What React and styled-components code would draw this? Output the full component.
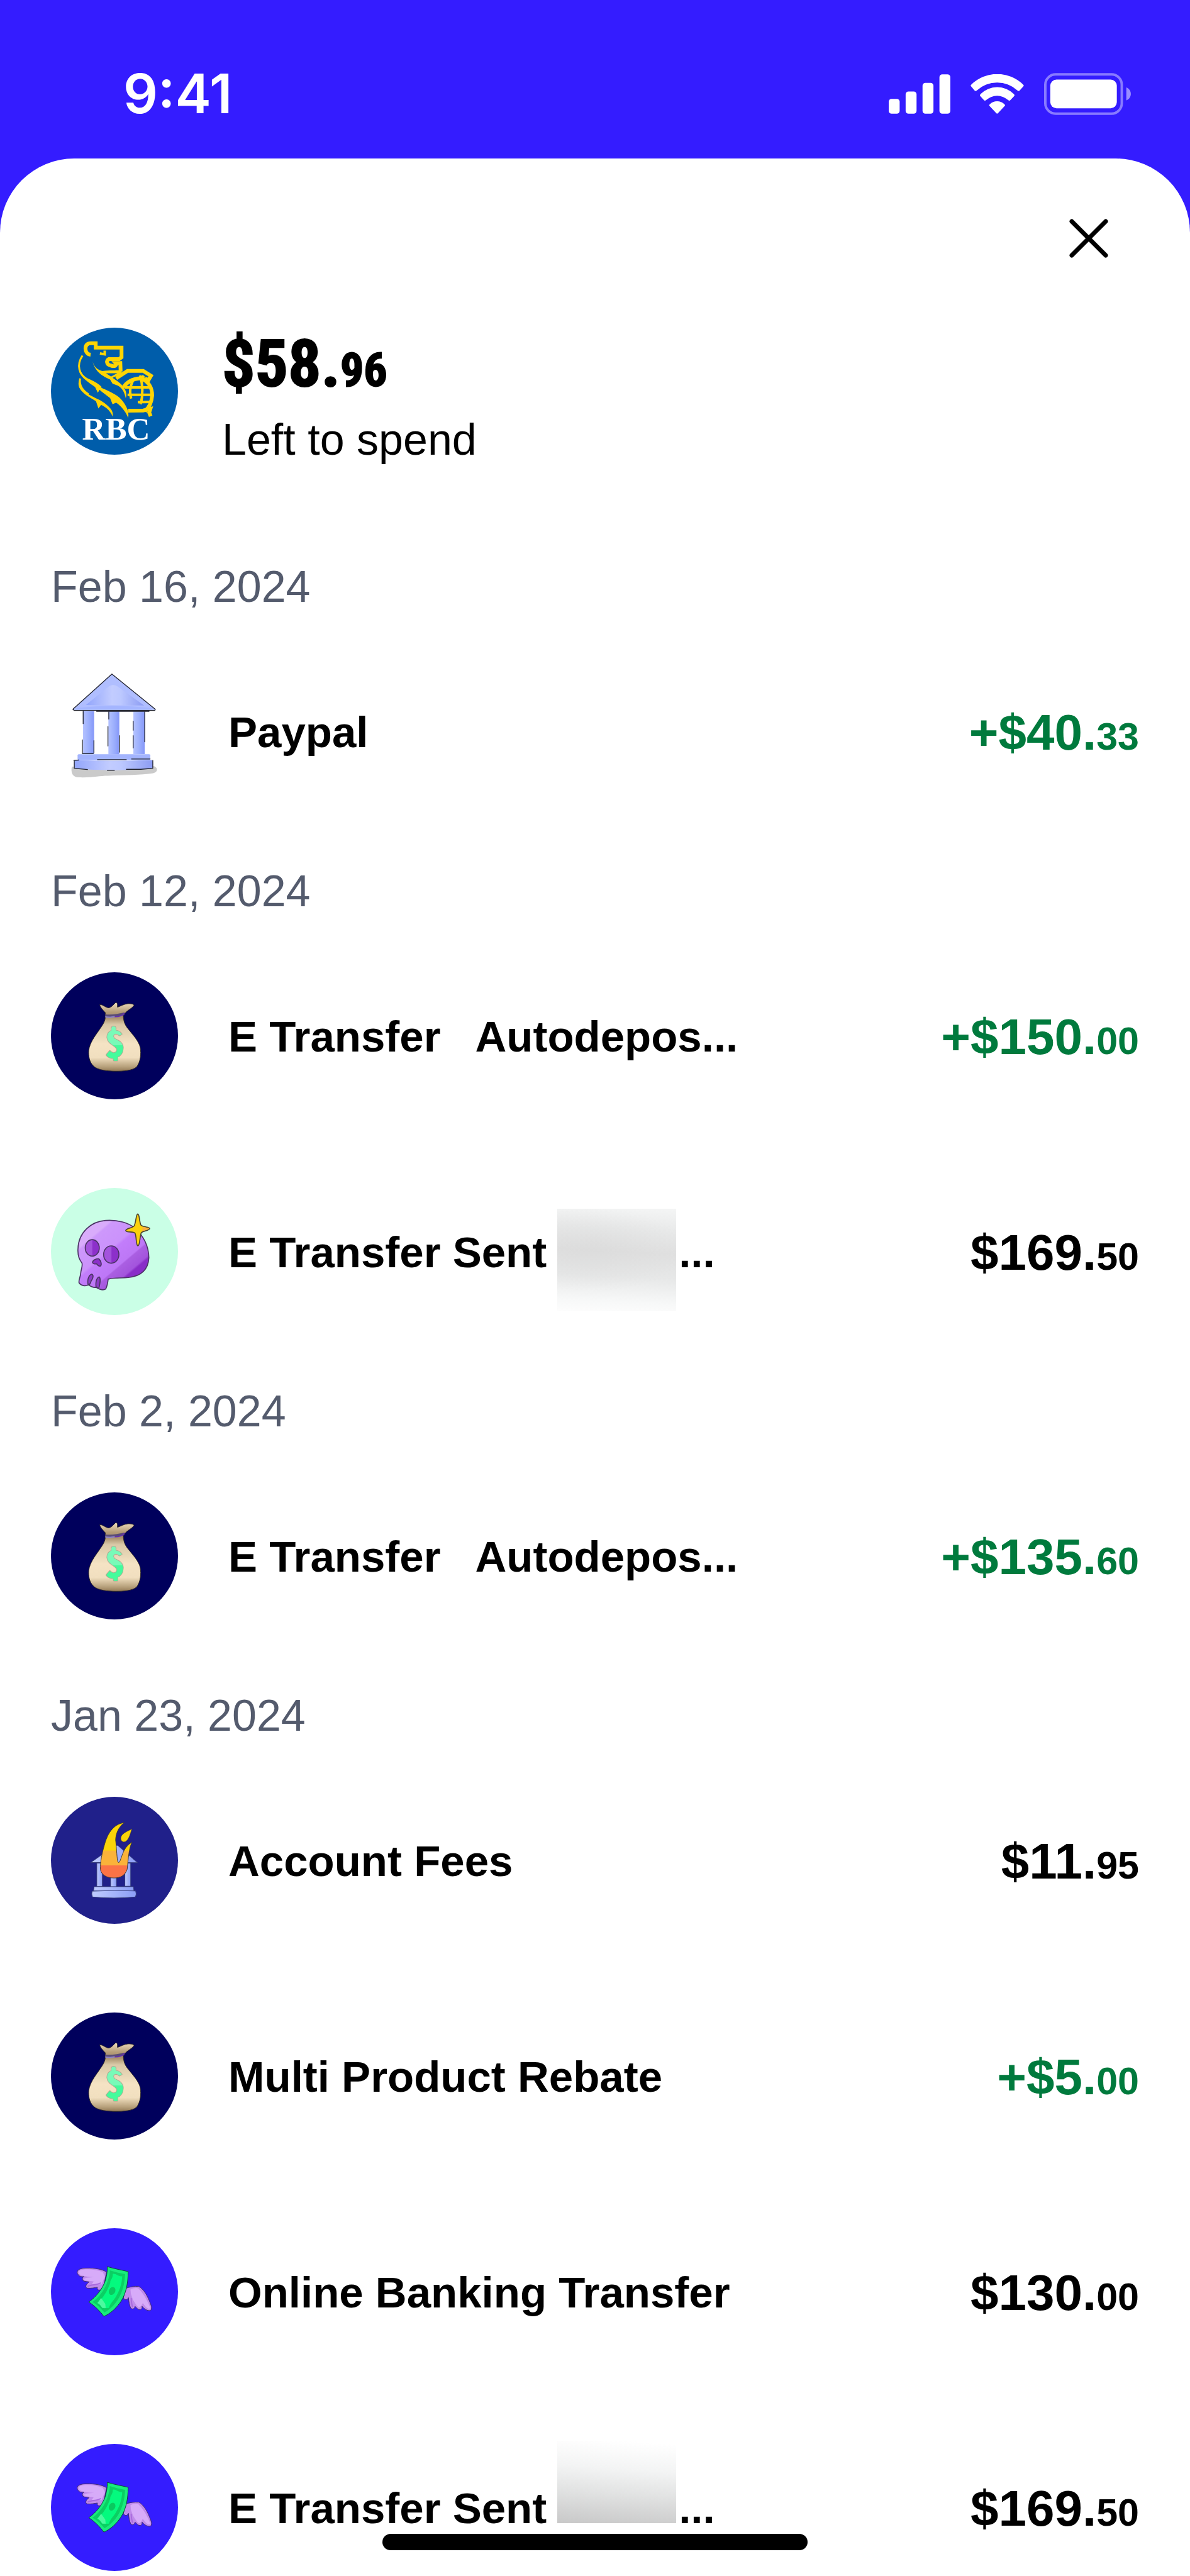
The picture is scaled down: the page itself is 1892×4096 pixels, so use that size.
import React from "react"
import styled, { createGlobalStyle, ThemeProvider } from "styled-components"

const theme = {
  brand: "#341cff",
  background: "#ffffff",
  text: "#000000",
  muted: "#545b6d",
  positive: "#007a3d",
}

const GlobalStyle = createGlobalStyle`
  * {
    box-sizing: border-box;
    margin: 0;
    padding: 0;
  }
  body {
    font-family: "Liberation Sans", Arial, sans-serif;
  }
`

const Screen = styled.div`
  height: 100vh;
  display: flex;
  flex-direction: column;
  overflow: hidden;
  color: ${props => props.theme.text};
  background: ${props => props.theme.brand};
`

const StatusBar = styled.header`
  flex-shrink: 0;
  height: 252px;
  padding: 46px 94px 0 196px;
  display: flex;
  align-items: center;
  justify-content: space-between;
  color: ${props => props.theme.background};
`

const Clock = styled.time`
  font-family: Inter, sans-serif;
  font-size: 86px;
  font-weight: 600;
  line-height: 100px;
`

const StatusIcons = styled.div`
  display: flex;
  align-items: center;
  gap: 32px;
`

const Sheet = styled.main`
  flex: 1;
  min-height: 0;
  overflow: hidden;
  padding: 77px 81px 0;
  border-radius: 118px 118px 0 0;
  background: ${props => props.theme.background};
`

const CloseButton = styled.button`
  display: flex;
  align-items: center;
  justify-content: center;
  width: 100px;
  height: 100px;
  margin: 0 30px 76px auto;
  border: 0;
  background: none;
  color: inherit;
  cursor: pointer;
`

const Account = styled.section`
  display: flex;
  align-items: center;
  gap: 70px;
  margin-bottom: 111px;
`

const AccountInfo = styled.div`
  display: flex;
  flex-direction: column;
  gap: 20px;
  padding-top: 14px;
`

const Balance = styled.h1`
  font-family: "Roboto Condensed", "Liberation Sans Narrow", sans-serif;
  font-size: 104px;
  font-weight: 700;
  line-height: 120px;
  -webkit-text-stroke: 2px currentColor;
`

const BalanceCents = styled.span`
  font-size: 74px;
  line-height: 1;
`

const BalanceLabel = styled.p`
  font-size: 70px;
  line-height: 80px;
`

const DateHeading = styled.h2`
  padding: 43px 0 18px;
  font-size: 70px;
  font-weight: 400;
  line-height: 80px;
  color: ${props => props.theme.muted};
`

const List = styled.ul`
  list-style: none;
`

const Row = styled.li`
  display: flex;
  align-items: center;
  gap: 80px;
  height: 343px;
`

const Title = styled.p`
  flex: 1;
  display: flex;
  align-items: center;
  padding-top: 4px;
  font-size: 69px;
  font-weight: 700;
  line-height: 80px;
  white-space: pre;
`

const Amount = styled.p`
  padding-top: 4px;
  font-size: 80px;
  font-weight: 700;
  line-height: 96px;
  color: ${props => (props.$positive ? props.theme.positive : "inherit")};
`

const Cents = styled.span`
  font-size: 61px;
  line-height: 1;
`

// Hides the recipient's name
const Redacted = styled.span`
  width: 189px;
  height: ${props => (props.$fade ? "131px" : "163px")};
  margin: ${props => (props.$fade ? "-84px 4px 0 17px" : "24px 4px 0 17px")};
  background: ${props =>
    props.$fade
      ? "linear-gradient(184deg, #ffffff 4%, #f3f4f4 35%, #e2e3e3 62%, #c8c8c8 100%)"
      : `radial-gradient(ellipse 80% 40% at 30% 40%, rgba(216, 216, 216, 0.5), rgba(222, 222, 222, 0)),
         linear-gradient(183deg, #f4f5f5 0%, #e8e9e9 22%, #e0e0e0 42%, #e7e8e8 65%, #f7f8f8 88%, #fdfdfd 100%)`};
`

const HomeIndicator = styled.div`
  position: fixed;
  left: 50%;
  bottom: 41px;
  width: 676px;
  height: 26px;
  margin-left: -338px;
  border-radius: 13px;
  background: ${props => props.theme.text};
`

const RoundIcon = styled.svg`
  flex-shrink: 0;
  width: 202px;
  height: 202px;
  border-radius: 50%;
  background: ${props => props.$color || "transparent"};
`

const SignalIcon = () => (
  <svg width="98" height="63" viewBox="40 57 299 191" fill="currentColor" aria-hidden="true">
    <rect x="40" y="176" width="53" height="72" rx="14" />
    <rect x="122" y="140" width="53" height="108" rx="14" />
    <rect x="204" y="98" width="53" height="150" rx="14" />
    <rect x="286" y="57" width="53" height="191" rx="14" />
  </svg>
)

const WifiIcon = () => (
  <svg width="85" height="63" viewBox="437 57 259 192" fill="currentColor" aria-hidden="true">
    <path d="M441 117Q435 112 441 107A180 180 0 0 1 692 107Q698 112 692 117L675 136Q670 141 665 136A147 147 0 0 0 467 136Q462 141 457 136Z" />
    <path d="M485 164Q480 159 485 154A113 113 0 0 1 648 154Q653 159 648 164L630 183Q625 188 620 183A79 79 0 0 0 512 183Q507 188 502 183Z" />
    <path d="M530 212Q525 207 530 203A50 50 0 0 1 602 203Q607 207 602 212L570 246Q566 250 562 246Z" />
  </svg>
)

const BatteryIcon = () => (
  <svg width="138" height="67" viewBox="795 52 420 202" aria-hidden="true">
    <rect x="801" y="58" width="370" height="190" rx="50" fill="none" stroke="#fff" strokeOpacity=".42" strokeWidth="12" />
    <rect x="825" y="83" width="322" height="139" rx="30" fill="#fff" />
    <path d="M1193 121C1222 132 1222 173 1193 184Z" fill="#fff" fillOpacity=".5" />
  </svg>
)

const CloseIcon = () => (
  <svg width="62" height="62" viewBox="0 0 62 62" fill="none" stroke="currentColor" strokeWidth="7" strokeLinecap="round" aria-hidden="true">
    <path d="M4 4L58 58M58 4L4 58" />
  </svg>
)

const BankLogo = () => (
  <RoundIcon $color="#005daa" viewBox="0 0 205 205" role="img" aria-label="RBC">
    <g transform="scale(.4847 .3333) translate(-45 -57)" fill="#ffd503">
      <path d="M150 192C128 240 140 286 164 305C178 316 196 322 212 348C246 370 270 384 285 415C298 440 306 470 302 494C294 462 278 436 262 420L250 428L242 398C228 382 215 370 207 358L201 372L192 345C174 325 145 300 140 270C135 240 140 215 150 192Z" />
      <path d="M142 303C138 340 152 362 170 380C190 398 214 408 230 430C245 448 254 465 250 487C244 464 232 445 212 431L203 448L195 413C175 395 140 370 137 335C136 322 138 310 142 303Z" />
      <path d="M184 220C188 245 198 260 216 267C240 262 260 266 276 262L282 278L250 300C264 315 284 330 292 358C298 378 296 392 294 398C290 372 284 352 268 338L250 328L242 308C220 295 190 270 184 220Z" />
      <path d="M228 278L266 278L245 294Z" fill="#005daa" />
      <path
        d="M150 192C128 240 140 286 164 305C178 316 196 322 212 348M142 303C138 340 152 362 170 380"
        fill="none"
        stroke="#ffd503"
        strokeWidth="3"
        vectorEffect="non-scaling-stroke"
      />
      <g fill="none" stroke="#ffd503" strokeWidth="6">
        <path vectorEffect="non-scaling-stroke" d="M177 188C166 186 160 172 160 158C160 142 166 132 178 132L194 132L194 154L280 154L280 200L272 209L238 209C228 218 230 236 244 240C258 248 266 238 260 228L276 228L277 270" />
        <path vectorEffect="non-scaling-stroke" d="M262 302L300 266L352 266L378 290L370 310L358 304" />
        <path vectorEffect="non-scaling-stroke" d="M286 346C300 315 320 304 342 302C370 312 382 350 382 385C380 425 370 446 358 462" />
        <path vectorEffect="non-scaling-stroke" d="M302 459L352 458L376 450L372 468L377 486" />
      </g>
      <g fill="none" stroke="#ffd503" strokeWidth="4">
        <path vectorEffect="non-scaling-stroke" d="M208 182L224 186L224 168" />
        <path vectorEffect="non-scaling-stroke" d="M342 288C350 330 352 380 344 428M320 308C308 340 306 365 312 400M348 290L356 300M292 346L372 346M300 382L384 382M334 418L378 416" />
      </g>
    </g>
    <text x="105" y="181" textAnchor="middle" fill="#fff" fontFamily="Liberation Serif, serif" fontSize="52" fontWeight="700">
      RBC
    </text>
  </RoundIcon>
)

const BankIcon = () => (
  <RoundIcon viewBox="65 52 615 615" aria-hidden="true">
    <defs>
      <linearGradient id="pillar">
        <stop offset="0" stopColor="#b4c2ff" />
        <stop offset=".5" stopColor="#9db0fd" />
        <stop offset="1" stopColor="#8597f8" />
      </linearGradient>
      <linearGradient id="pediment">
        <stop offset="0" stopColor="#92a5fb" />
        <stop offset=".45" stopColor="#c2ccff" />
        <stop offset=".6" stopColor="#bcc8ff" />
        <stop offset="1" stopColor="#8c9cf3" />
      </linearGradient>
    </defs>
    <path d="M166 530C160 560 170 582 200 582C270 584 300 574 340 574C420 570 500 572 560 562C584 556 584 536 564 528Z" fill="#cacaca" />
    <path d="M360 82L171 252L178 258L568 258L570 252Z" fill="#b0beff" stroke="#20222e" strokeWidth="4" strokeLinejoin="round" />
    <path d="M234 232L345 142Q366 126 388 142L516 234Z" fill="url(#pediment)" />
    <path d="M190 246Q370 226 550 246L556 256H182Z" fill="#a4b5ff" />
    <g fill="url(#pillar)">
      <rect x="220" y="261" width="54" height="208" />
      <rect x="343" y="261" width="53" height="210" />
      <rect x="464" y="261" width="55" height="208" />
    </g>
    <g fill="none" stroke="#20222e" strokeWidth="4" strokeLinecap="round">
      <path d="M221 262V322M217 400V462M273 404V462M345 264V300M341 336V430M396 380V460M463 310V354M463 380V440M519 264V410" />
      <path d="M286 262H540M216 467H270" />
    </g>
    <rect x="194" y="470" width="352" height="28" rx="6" fill="#a3b4fe" />
    <path d="M180 498Q370 504 556 498Q562 520 556 539Q370 556 180 539Q174 518 180 498Z" fill="url(#pediment)" />
    <path d="M178 500V538L242 544M290 496H430M455 493H545M430 543H500L558 538V500M338 548H372M176 500L200 498" fill="none" stroke="#20222e" strokeWidth="4" strokeLinecap="round" />
  </RoundIcon>
)

const MoneyBagIcon = () => (
  <RoundIcon $color="#00005c" viewBox="65 53 615 615" aria-hidden="true">
    <defs>
      <linearGradient id="bag" x1="0" y1="0" x2="0" y2="1">
        <stop offset="0" stopColor="#efddbd" />
        <stop offset=".14" stopColor="#b59d78" />
        <stop offset=".22" stopColor="#a78f6b" />
        <stop offset=".32" stopColor="#dac8a7" />
        <stop offset=".5" stopColor="#ead9b9" />
        <stop offset=".6" stopColor="#f5e3c4" />
        <stop offset=".8" stopColor="#f1dfbf" />
        <stop offset=".93" stopColor="#b9a37e" />
        <stop offset="1" stopColor="#957b56" />
      </linearGradient>
      <linearGradient id="dollar" x1="0" y1="0" x2="0" y2="1">
        <stop offset=".54" stopColor="#78fab8" />
        <stop offset=".56" stopColor="#45fb9c" />
      </linearGradient>
    </defs>
    <path d="M302 209C318 210 332 226 346 225C360 222 370 206 379 199C388 200 387 210 387 222C400 218 420 206 438 205C452 205 466 206 467 213C460 226 438 236 428 246L415 262C417 292 422 306 438 326C462 356 490 386 497 416C503 450 498 486 480 511C460 530 410 532 380 532C345 532 290 528 270 506C250 486 246 456 248 430C254 394 276 364 296 336C316 308 328 290 328 268V248C316 236 300 218 302 209Z" fill="url(#bag)" stroke="#2b2629" strokeWidth="3" />
    <path d="M328 256C350 262 390 254 422 247L420 260C390 270 360 268 328 270Z" fill="#5a4c77" />
    <path d="M328 268C350 274 372 268 374 266" stroke="#8d83c6" strokeWidth="6" fill="none" />
    <path d="M374 268C395 268 412 262 420 250" stroke="#6531b1" strokeWidth="6" fill="none" />
    <g strokeLinejoin="round">
      <path id="sign" d="M359 324Q360 314 369 316Q379 316 378 328L377 336Q396 336 407 352L397 358Q382 344 370 353Q360 366 374 376C394 386 412 394 413 418C412 442 404 456 386 462L386 480L370 480L368 468C352 468 342 464 334 453L350 434C362 450 384 446 386 428C386 408 340 402 338 368C338 350 346 340 359 336Z" fill="url(#dollar)" stroke="#b5a48e" strokeWidth="8" />
      <path d="M359 324Q360 314 369 316Q379 316 378 328L377 336Q396 336 407 352L397 358Q382 344 370 353Q360 366 374 376C394 386 412 394 413 418C412 442 404 456 386 462L386 480L370 480L368 468C352 468 342 464 334 453L350 434C362 450 384 446 386 428C386 408 340 402 338 368C338 350 346 340 359 336Z" fill="url(#dollar)" stroke="url(#dollar)" strokeWidth="3" />
    </g>
  </RoundIcon>
)

const SkullIcon = () => (
  <RoundIcon $color="#caffe6" viewBox="65 47 615 615" aria-hidden="true">
    <defs>
      <linearGradient id="skull" gradientUnits="userSpaceOnUse" x1="250" y1="240" x2="470" y2="500">
        <stop offset=".12" stopColor="#d9acfb" />
        <stop offset=".15" stopColor="#cd98fb" />
        <stop offset=".42" stopColor="#cb92fb" />
        <stop offset=".46" stopColor="#c27dfb" />
        <stop offset=".68" stopColor="#bd77f6" />
        <stop offset=".7" stopColor="#aa5fe2" />
        <stop offset=".84" stopColor="#a354dd" />
        <stop offset=".87" stopColor="#892ec8" />
      </linearGradient>
      <linearGradient id="socket">
        <stop offset=".45" stopColor="#a453dd" />
        <stop offset=".55" stopColor="#8c30ca" />
      </linearGradient>
    </defs>
    <g stroke="#4c3566" strokeWidth="5" strokeLinejoin="round">
      <path d="M215 410C200 392 194 366 196 340C198 262 260 208 330 204C390 200 440 216 470 240C514 280 538 330 539 384C536 442 500 474 440 480C405 484 370 480 342 488C340 506 336 524 330 536C318 544 300 538 284 528C272 530 258 524 246 516C232 524 210 520 201 506C198 494 208 476 209 460C210 442 220 424 215 410Z" fill="url(#skull)" />
      <ellipse cx="265" cy="337" rx="34" ry="40" fill="url(#socket)" />
      <ellipse cx="357" cy="369" rx="37" ry="42" fill="url(#socket)" />
      <path d="M266 407C268 396 286 388 297 390C306 398 312 416 306 424C298 428 290 420 286 414C278 416 268 414 266 407Z" fill="#8c30ca" />
      <path d="M245 516C240 494 246 470 262 464C274 468 268 486 260 496C256 508 254 516 245 516ZM284 528C280 508 284 482 298 477C308 484 302 508 298 528Z" fill="#8c3bc7" />
    </g>
    <path d="M485 173C494 173 492 205 500 226C510 238 542 234 543 243C542 254 508 254 502 264C494 286 496 326 486 327C476 326 480 284 472 266C464 256 430 264 427 253C430 240 460 242 468 230C478 210 476 174 485 173Z" fill="#fbd10d" stroke="#4b4531" strokeWidth="5" strokeLinejoin="round" />
    <path d="M508 236L538 240Q541 244 536 247L508 256Z" fill="#fcb040" />
  </RoundIcon>
)

const BurningBankIcon = () => (
  <RoundIcon $color="#20208a" viewBox="65 57 615 615" aria-hidden="true">
    <defs>
      <linearGradient id="stone">
        <stop offset="0" stopColor="#c0ccff" />
        <stop offset="1" stopColor="#8b9df6" />
      </linearGradient>
      <linearGradient id="fire" gradientUnits="userSpaceOnUse" x1="0" y1="180" x2="0" y2="450">
        <stop offset=".5" stopColor="#fad408" />
        <stop offset=".52" stopColor="#fab33a" />
        <stop offset=".77" stopColor="#fab33a" />
        <stop offset=".78" stopColor="#fb7346" />
      </linearGradient>
    </defs>
    <g fill="url(#stone)" stroke="#343a78" strokeWidth="3">
      <path d="M258 375L376 292L388 292L484 376Z" />
      <rect x="287" y="378" width="27" height="114" />
      <rect x="354" y="378" width="28" height="116" />
      <rect x="423" y="378" width="28" height="112" />
      <path d="M274 492H464L467 512H271Z" />
      <path d="M264 514Q370 508 475 513Q481 528 474 542Q370 552 266 542Q260 528 264 514Z" />
    </g>
    <path d="M420 182C392 204 379 234 378 266C382 300 384 340 387 366Q392 384 400 366C412 334 420 298 457 277C442 310 440 350 434 408C424 438 402 450 370 450C334 450 310 436 304 408C304 370 312 330 324 290C336 244 362 190 420 182Z" fill="url(#fire)" stroke="#3d3a3a" strokeWidth="3" />
    <path d="M457 212C448 240 440 274 418 276C404 274 400 260 405 249C412 232 436 224 457 212Z" fill="#fad408" stroke="#3d3a3a" strokeWidth="2" />
  </RoundIcon>
)

const FlyingMoneyIcon = () => (
  <RoundIcon $color="#341cff" viewBox="65 46 615 615" aria-hidden="true">
    <g stroke="#3f2b70" strokeWidth="3" strokeLinejoin="round">
      <path d="M334 258C310 242 260 236 220 240C192 244 186 260 198 272C204 280 214 282 224 280C212 288 216 304 236 304L250 306C236 316 228 330 240 336C260 338 276 334 290 332C286 348 300 348 318 340Z" fill="#c08bea" />
      <path d="M424 338C446 330 470 326 490 328C514 340 534 376 546 410C556 432 552 446 540 445C526 444 514 434 506 424C508 438 500 444 486 438L472 424C470 436 462 440 452 434C444 420 442 400 440 382C434 396 422 394 416 384Z" fill="#c08bea" />
    </g>
    <path d="M316 258C280 244 230 240 206 250C196 258 200 270 214 274C236 280 260 284 284 282C260 284 232 284 224 292C226 302 252 300 272 304L262 318L310 318L326 280ZM450 342C470 334 486 332 492 342C512 360 534 400 546 432C538 444 522 426 510 408C506 414 500 428 490 430C478 420 470 404 462 392L452 364Z" fill="#d7abf9" />
    <path d="M242 328C260 318 290 322 306 310M454 384C452 400 458 418 460 428" fill="none" stroke="#a96add" strokeWidth="6" />
    <path d="M338 232C370 242 405 248 439 256C438 310 430 360 404 400C384 430 356 458 321 473C300 444 274 420 248 403C284 378 310 344 326 306C334 282 338 258 338 232Z" fill="#18ec7c" stroke="#123e3f" strokeWidth="3" />
    <path d="M350 250C374 258 398 264 424 268C422 312 412 354 390 390C372 418 350 440 324 454C306 434 290 416 266 404C300 378 326 342 338 306C346 284 350 270 350 250Z" fill="#0bcf63" />
    <path d="M364 268C378 262 394 284 410 278C408 320 396 350 378 380C364 402 350 412 346 432C330 434 318 434 314 432C304 420 304 412 288 408C318 386 340 346 352 310C350 296 366 290 364 268Z" fill="#04fa7e" />
    <path d="M308 384L328 412L330 432H314C306 420 300 412 290 408Z" fill="#4bfa9f" />
    <ellipse cx="361" cy="350" rx="15" ry="20" transform="rotate(28 361 350)" fill="#0ac95f" />
  </RoundIcon>
)

const icons = {
  bank: BankIcon,
  bag: MoneyBagIcon,
  skull: SkullIcon,
  fire: BurningBankIcon,
  money: FlyingMoneyIcon,
}

const days = [
  {
    date: "Feb 16, 2024",
    items: [{ icon: "bank", title: "Paypal", dollars: "40", cents: "33", positive: true }],
  },
  {
    date: "Feb 12, 2024",
    items: [
      { icon: "bag", title: "E Transfer   Autodepos...", dollars: "150", cents: "00", positive: true },
      { icon: "skull", title: "E Transfer Sent", redacted: "full", dollars: "169", cents: "50" },
    ],
  },
  {
    date: "Feb 2, 2024",
    items: [{ icon: "bag", title: "E Transfer   Autodepos...", dollars: "135", cents: "60", positive: true }],
  },
  {
    date: "Jan 23, 2024",
    items: [
      { icon: "fire", title: "Account Fees", dollars: "11", cents: "95" },
      { icon: "bag", title: "Multi Product Rebate", dollars: "5", cents: "00", positive: true },
      { icon: "money", title: "Online Banking Transfer", dollars: "130", cents: "00" },
      { icon: "money", title: "E Transfer Sent", redacted: "fade", dollars: "169", cents: "50" },
    ],
  },
]

const Transaction = ({ icon, title, redacted, dollars, cents, positive }) => {
  const Icon = icons[icon]
  return (
    <Row>
      <Icon />
      <Title>
        {title}
        {redacted && (
          <>
            <Redacted $fade={redacted === "fade"} />
            ...
          </>
        )}
      </Title>
      <Amount $positive={positive}>
        {positive && "+"}${dollars}.<Cents>{cents}</Cents>
      </Amount>
    </Row>
  )
}

const App = () => {
  return (
    <ThemeProvider theme={theme}>
      <GlobalStyle />
      <Screen>
        <StatusBar>
          <Clock>9:41</Clock>
          <StatusIcons>
            <SignalIcon />
            <WifiIcon />
            <BatteryIcon />
          </StatusIcons>
        </StatusBar>
        <Sheet>
          <CloseButton type="button" aria-label="Close">
            <CloseIcon />
          </CloseButton>
          <Account>
            <BankLogo />
            <AccountInfo>
              <Balance>
                $58.<BalanceCents>96</BalanceCents>
              </Balance>
              <BalanceLabel>Left to spend</BalanceLabel>
            </AccountInfo>
          </Account>
          {days.map(day => (
            <section key={day.date}>
              <DateHeading>{day.date}</DateHeading>
              <List>
                {day.items.map(item => (
                  <Transaction key={item.title} {...item} />
                ))}
              </List>
            </section>
          ))}
        </Sheet>
      </Screen>
      <HomeIndicator />
    </ThemeProvider>
  )
}

export default App
